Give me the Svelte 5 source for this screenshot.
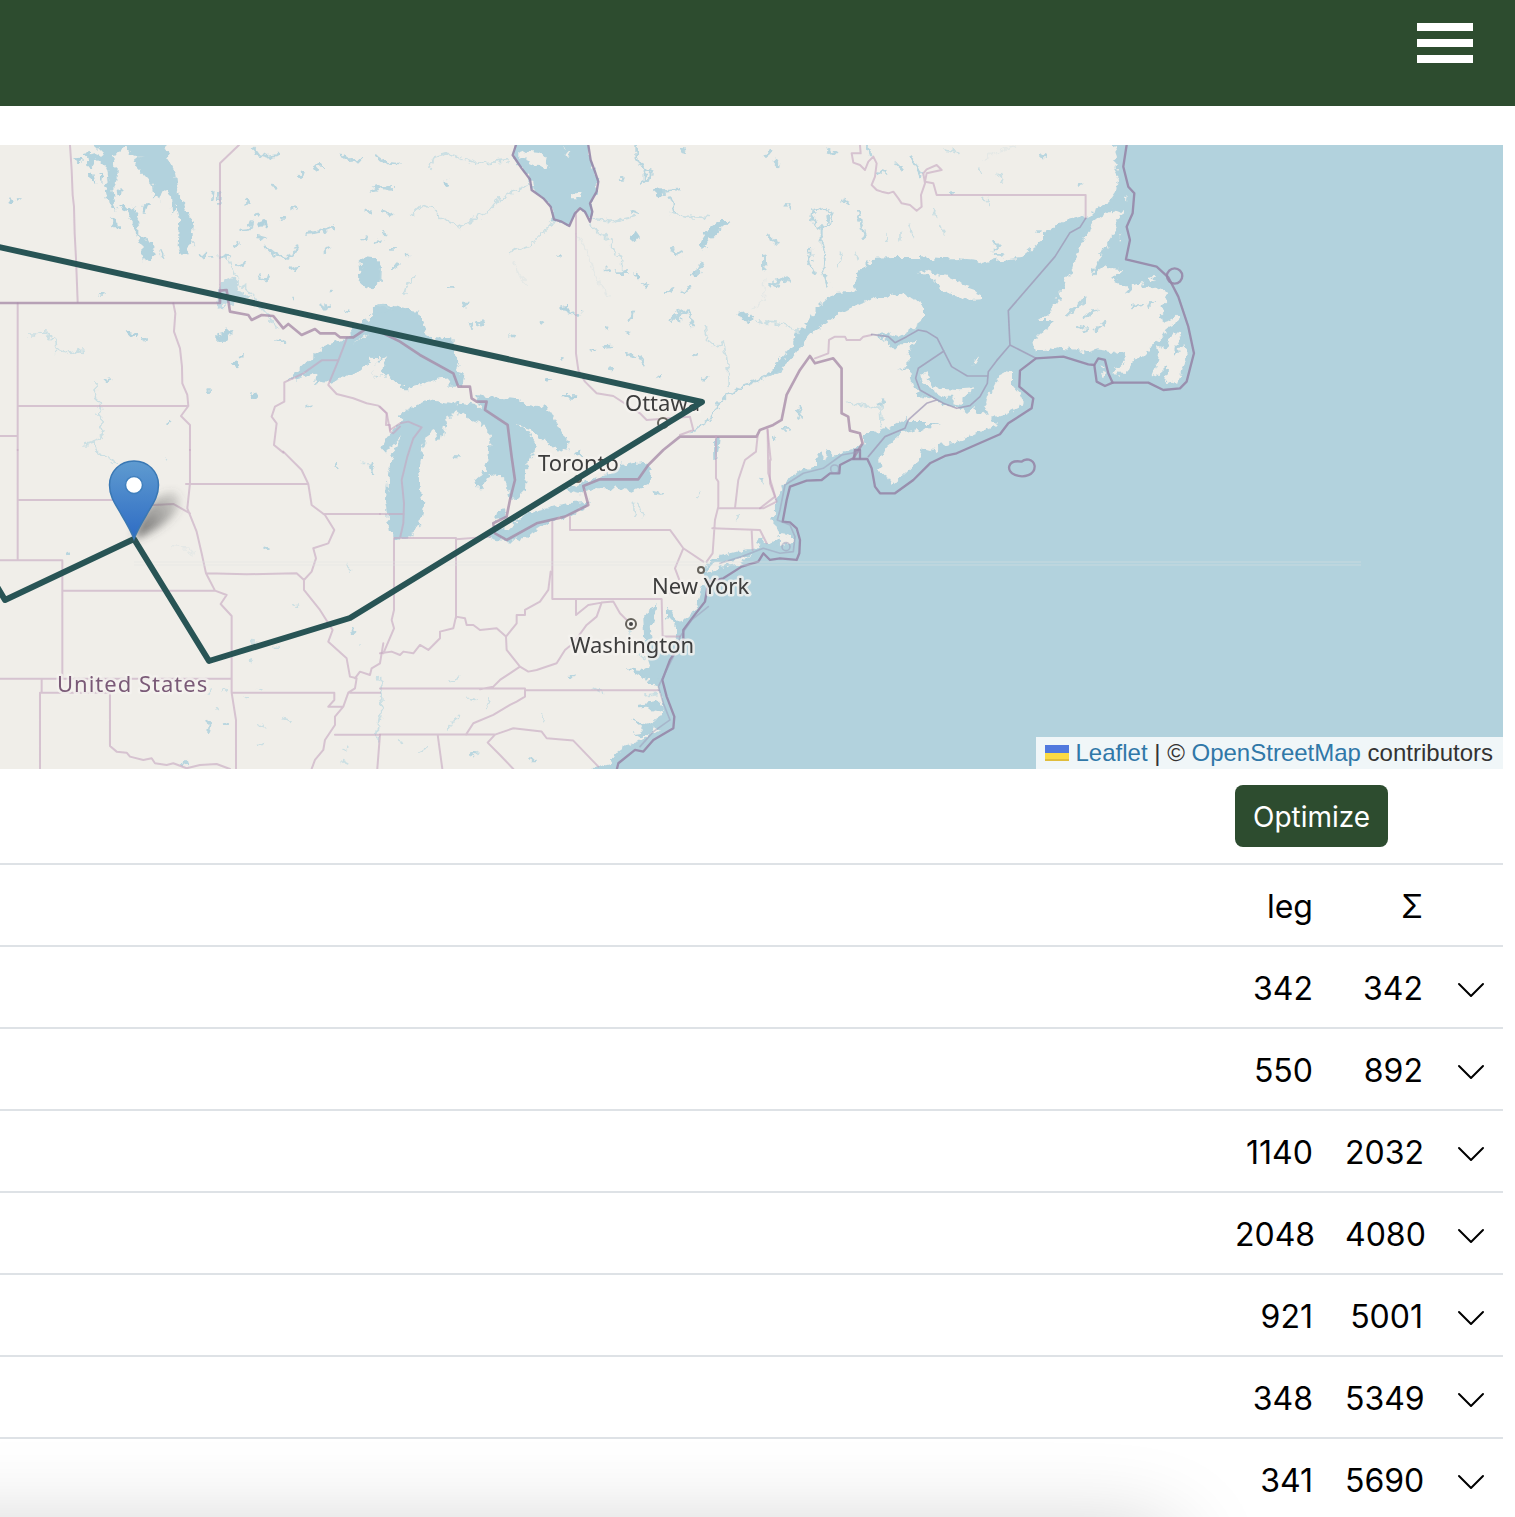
<script>
  const legs = [342, 550, 1140, 2048, 921, 348, 341];
  const rows = legs.map((leg, i) => ({
    leg,
    sum: legs.slice(0, i + 1).reduce((a, b) => a + b, 0)
  }));
</script>

<div class="page">
  <header>
    <button class="menu" aria-label="Menu"><span></span><span></span><span></span></button>
  </header>

  <main>
    <div class="map">
      <svg class="tiles" viewBox="0 145 1503 624" role="img" aria-label="Route map">
        <defs>
          <linearGradient id="pin" x1="0" y1="0" x2="0" y2="1">
            <stop offset="0" stop-color="#5f9bd0" />
            <stop offset="1" stop-color="#2e6cc4" />
          </linearGradient>
          <linearGradient id="shade" x1="0" y1="1" x2="1" y2="0">
            <stop offset="0" stop-color="#444" stop-opacity=".8" />
            <stop offset="1" stop-color="#555" stop-opacity=".15" />
          </linearGradient>
          <filter id="soft" x="-40%" y="-40%" width="180%" height="180%"><feGaussianBlur stdDeviation="4" /></filter>
          <!-- roughens shorelines the way low-zoom map tiles do -->
          <filter id="shore" filterUnits="userSpaceOnUse" x="-20" y="125" width="1543" height="664">
            <feTurbulence type="fractalNoise" baseFrequency=".16" numOctaves="2" seed="4" />
            <feDisplacementMap in="SourceGraphic" scale="9" xChannelSelector="R" yChannelSelector="G" />
            <feGaussianBlur stdDeviation=".6" />
          </filter>
          <filter id="tile" filterUnits="userSpaceOnUse" x="-20" y="125" width="1543" height="664"><feGaussianBlur stdDeviation=".5" /></filter>
        </defs>

        <rect class="water" x="0" y="145" width="1503" height="624" />

        <g filter="url(#shore)">
        <!-- mainland -->
        <path class="land" d="M-20 125H1113L1113 145 1117 157 1113 162 1117 167 1115 172 1119 180 1117 190 1110 200 1093 212 1087 218 1082 215 1067 220 1053 227 1043 235 1043 240 1032 248 1020 258 993 261 982 264 977 260 957 258 940 259 920 257 893 257 873 258 863 268 857 275 855 287 850 292 835 293 823 302 813 312 807 323 797 333 792 347 780 362 770 372 759 380 780 372 793 357 803 343 813 332 827 322 843 312 860 303 877 297 897 294 910 297 923 307 923 320 910 330 898 337 887 333 875 334 888 342 893 349 903 344 917 340 908 353 907 367 898 369 910 370 912 383 917 395 933 398 942 405 960 408 967 414 975 407 978 415 988 413 985 403 987 395 993 390 1003 370 1012 372 1012 385 1023 397 1022 405 1007 413 990 418 997 425 977 433 957 442 940 445 937 452 923 448 920 460 907 472 893 485 888 477 881 473 879 460 887 445 903 433 920 430 940 423 910 423 907 418 890 428 873 433 862 433 865 443 857 448 843 452 833 455 828 451 825 460 820 452 815 460 815 467 800 470 787 480 780 490 776 502 778 510 770 520 777 527 780 535 792 537 792 542 777 547 765 545 760 548 743 550 713 558 707 563 703 575 703 583 698 600 692 613 682 623 673 617 667 606 667 617 677 627 677 637 667 653 658 667 655 680 660 690 663 703 663 715 647 725 660 730 643 740 627 745 617 752 610 763 593 767 590 789H-20Z" />
        <path class="land" d="M711 564 735 559 752 556 742 562 722 568 707 572Z" />

        <!-- north-west lakes -->
        <g transform="translate(0 140) scale(.3333)">
          <path class="water" d="M285 15V-20H485L495 15 510 65 525 95 530 140 545 180 560 215 580 245 575 285 578 312 565 318 558 340 540 342 533 320 537 250 540 235 530 195 517 228 513 170 500 152 485 158 477 180 462 170 455 132 435 110 418 95 400 66 418 52 435 50 395 50 380 15H368L362 38 335 42 350 80 350 120 340 140 345 190 352 212 335 205 322 185 315 130 328 115 322 85 300 62 285 58 280 82 262 78 260 52 252 42 275 38 300 48 310 40Z" />
          <path class="water" d="M412 283 440 295 455 315 468 342 455 360 428 364 424 340 425 318ZM332 228 348 238 356 262 340 262ZM400 200 412 205 408 228 425 250 415 262 415 285 405 275 402 255 388 228 380 215 362 210 358 198 370 190 382 205ZM425 218 428 200 440 190 452 190 440 200 434 218ZM350 145 362 150 360 168 352 165ZM268 98 280 102 286 125 275 122ZM300 100 310 105 307 124 300 118ZM226 55 240 53 246 64 234 70ZM22 190 30 170 38 185ZM44 175H60L52 182Z" />
          <path class="water" d="M1082 365 1100 352 1130 355 1146 380 1142 430 1120 448 1095 440 1075 420 1074 402 1084 395ZM652 580 680 572 702 570 690 592 682 602 652 603ZM695 668 715 662 722 680 710 688ZM715 645 732 640 730 654ZM750 758 768 755 774 775 758 778ZM775 248 795 240 800 258 780 262ZM380 575 415 585 412 592 385 588Z" />
          <path class="lake" d="M760 25 775 45 800 52 835 45M945 85 960 72 972 85M1020 45 1045 62 1080 60M1130 50 1160 70 1195 72M900 110 910 98M815 138 835 142M1115 148 1145 140 1175 145M920 280 960 275 995 262M725 270 745 268 752 245M795 318 825 345 860 352 880 345 892 320M760 225 775 222M875 205 888 200M845 235 855 235M775 290 795 295M700 315 715 310M715 375 735 370M660 347 690 350M778 410 800 420 805 405M870 390 890 382M880 480 884 470M965 495 980 505 990 500M975 335 985 320M1085 300 1100 290M1125 310 1140 305M1100 215 1112 214M1150 215 1168 222M1040 510 1050 512M990 450H998M1180 385 1195 375M640 150 637 185M655 160V185M735 190 742 183M600 345H615M485 335 492 350M300 463H314M830 600 858 606M620 752H630M430 598 440 602M318 720 330 716M500 850 510 846M920 798H934M640 350 632 355" />
          <path class="river" d="M85 588 105 588 120 578 140 580 150 595 165 598 175 630 205 640 235 632 252 630M165 640 175 630M288 730 290 785 305 805 300 825 285 825M305 825 302 855 312 868 308 890 285 905 258 912M285 905 288 935 325 955M690 360 705 400 730 440 760 470 790 510 830 560" />
          <path class="water" d="M660 425 700 410 720 430 705 450 735 460 755 475 700 470 695 495 650 500 655 470Z" opacity=".75" />
          <!-- Lake Superior -->
          <path class="water" d="M860 722 900 685 960 628 1040 595 1060 570 1085 545 1110 535 1112 510 1130 495 1145 488 1195 502 1256 516 1268 550 1285 590 1360 596 1340 620 1378 660 1365 695 1395 700 1385 740 1345 740 1350 712 1325 715 1280 728 1240 738 1245 745 1210 745 1180 720 1165 708 1130 705 1115 715 1115 695 1135 665 1165 648 1130 648 1080 690 1050 705 1025 715 990 730 965 725 945 735 950 695 905 712Z" />
          <path class="water" d="M1110 535 1150 515 1200 508 1255 512 1275 570 1290 592 1360 596 1370 690 1250 735 1200 740 1100 620 1070 560Z" />
          <path class="land" d="M1115 715 1115 695 1135 665 1165 648 1150 670 1148 690 1165 708 1130 702ZM1145 652 1115 690 1110 650ZM1062 608 1108 585 1090 590Z" />
        </g>

        <!-- James Bay, Huron, Michigan -->
        <g transform="translate(380 140) scale(.3333)">
          <path class="water" d="M408-20H625V15L632 60 645 95 655 125 650 155 630 190 637 215 630 240 615 215 600 205 585 220 568 258 545 245 522 238 512 200 490 175 455 150 450 118 425 85 400 60 400 40Z" />
          <path class="land" d="M415 42 440 32 480 36 500 60 507 88 475 82 445 68 415 55ZM576 168 590 158 605 157 602 170 590 178 576 178ZM556 38 567 36 568 47 560 46ZM550 18 557 22 555 30Z" />
          <path class="water" d="M5 932 25 885 60 845 70 815 125 790 150 780 190 788 222 795 240 788 290 795 310 810 290 765 330 772 420 778 440 795 500 800 530 850 568 915 560 935 520 925 490 900 450 865 400 850 440 870 465 910 460 940 440 965 435 1050 405 1080 390 1078 375 1020 350 1000 325 1010 305 1045 290 1045 285 1020 310 1000 325 960 330 880 300 850 255 830 228 810 195 855 185 905 170 905 165 870 145 880 130 925 125 965 115 1000 130 1090 120 1150 90 1195 50 1200 30 1180 15 1080 25 1000 40 935 65 885 30 925 10 935Z" />
          <path class="water" d="M345 1170 385 1168 440 1120 490 1108 560 1090 630 1085 620 1100 560 1130 505 1150 460 1180 400 1205 350 1200 320 1190ZM355 1110 375 1108 378 1135 345 1140ZM560 1050 600 1030 640 1015 690 1000 720 975 760 970 800 965 815 985 812 1030 760 1055 700 1045 640 1045 600 1060Z" />
          <path class="water" d="M965 335 960 310 970 290 990 260 1020 240 1050 240 1040 252 1018 270 990 300 975 320ZM818 150 845 148 860 155 835 166ZM1075 518 1100 513 1117 535 1105 550 1088 542ZM540 500 560 494 570 512 550 515ZM190 122 202 122 206 138 196 142ZM530 345 542 338 542 355ZM935 405 955 392 958 400 942 412ZM630 628 650 626 645 636ZM745 288 765 272 778 290 765 305ZM760 400 775 398 778 415 768 415ZM785 430H802L798 445ZM830 712 845 702 848 718ZM540 762 595 763 592 775 560 772ZM585 935 600 928 610 945 590 950ZM498 714H510L504 724Z" />
          <path class="lake" d="M770 15V50L785 80 815 95 810 115 785 130M795 85V125M850 155 895 150M870 170 880 200 885 220M965 370 950 400M710 398H740M675 390 685 388M757 215 770 220M880 330 890 345 905 335M1150 345 1153 390M1168 290 1190 310M1175 430 1195 440M860 455 880 445M905 455 930 445M870 545 900 520 925 515 940 555M890 510 900 540M735 640 765 650M780 645 790 670M670 620 690 618M560 515 575 522 600 520M740 578H748M680 565 688 568M750 545 760 515M550 660 540 655M480 540 492 545M250 500 258 492M270 560 275 550M295 555 315 545M40 385 48 378M10 280 18 285M10 215 30 222M5 140 35 140M35 325 48 325M205 442H214M75 345H90M1155 45 1170 40M1185 65 1195 75M905 30 915 32M168 225H176M392 588H400M720 118H730M940 645 950 640M970 715 982 712M690 680 700 690M0 385V415M225 950 235 952M0 495 30 505" />
          <path class="river" d="M520 245 485 280 450 315 385 338M445 135 400 155 350 185 320 220 270 245 245 262 185 235 160 205 125 195 95 225M625 250 665 285 695 305 710 345 725 355V395M150 85 160 55 200 42 235 50 290 70 390 62M870 220 900 225 930 230 980 232M970 560 985 600 1010 620 1030 605 1040 650 1045 740M75 460 85 430 105 410M1130 540 1160 550 1200 552M640 235 700 245 760 230" />
          <path class="faint" d="M590 280 620 330 650 410 685 475M400 365 420 410 440 430M1155 415 1150 480 1120 510" />
          <path class="riverwide" d="M1200 690 1150 715 1090 735 1040 770 1010 800 990 840 960 860 930 880" />
          <path class="water" d="M1175 695 1200 650V690ZM1005 890H1020L1012 960H1006Z" />
        </g>

        <!-- Gulf of St Lawrence islands and Quebec lakes -->
        <g transform="translate(760 140) scale(.3333)">
          <path class="land" d="M470 396 490 390 520 398 560 408 590 420 615 438 650 450 665 478 630 480 600 472 565 460 540 445 525 425 500 405ZM478 718 502 690 508 700 500 718 515 725 520 742 560 745 600 748 643 745 625 760 608 775 605 795 580 790 585 770 550 770 525 755 500 742 495 728ZM640 670 655 650 660 652 650 668Z" />
          <path class="riverwide" d="M185 205 205 205 216 228 210 255 190 264 165 258 156 235 160 212 185 205M185 262V310L195 345 190 395 205 440M150 320 152 355 145 355 165 405" />
          <path class="lake" d="M200 225 203 245M15 50 30 35M45 60 58 75M205 30 225 42M80 190 92 205M30 295 55 310M245 180 262 190M10 355V385M35 435 60 420 75 410 90 430M295 215 305 260 315 290M355 95 380 100M410 70 430 90M455 50 480 105M325 20 330 45M570 155H578M847 47H854M700 305 712 312 705 330M705 343H728" />
          <path class="river" d="M0 545 60 550 100 565 120 580M555 30 600 40M655 85 665 100M715 100 730 125M672 175 685 190M520 205 530 230M445 250 460 290M420 280V300M380 280 384 300M235 380 245 340M288 340 292 360M545 260 555 282M265 790 330 800 360 805 372 785M360 810 365 860" />
          <path class="faint" d="M665 60 700 40 770 15" />
          <path class="lake" d="M360 795 370 785M110 810 122 835M120 800V815M40 890 42 900M70 868H84" />
        </g>

        <!-- Newfoundland -->
        <g transform="translate(1020 140) scale(.3333)">
          <path class="land" d="M40 602 60 582 85 562 105 542 80 540 50 540 65 528 90 530 95 505 110 478 125 480 118 455 130 445 140 415 155 390 170 340 185 310 200 302 190 290 210 275 220 245 240 230 275 210 280 220 312 210 302 238 285 238 290 262 275 290 262 310 250 335 235 355 220 388 215 410 235 390 260 370 275 385 308 388 290 402 275 415 295 430 320 440 320 465 345 435 372 425 365 445 400 440 442 460 435 485 415 500 435 515 418 530 440 545 475 525 475 545 445 560 425 595 405 605 390 630 365 655 345 655 330 680 320 702 275 700 280 685 300 680 320 655 315 642 295 645 262 632 230 628 205 636 160 628 110 622 80 632 48 633ZM395 710 412 670 418 640 410 615 435 630 450 600 475 575 486 580 465 620 460 650 480 625 493 612 500 640 485 690 475 728 455 725 435 730 440 700 442 678 415 702 400 712ZM385 418 400 410 408 420 395 428ZM245 675 255 678 248 685ZM246 695 256 698 252 712ZM310 170 320 165 318 178ZM295 300 308 296 304 308ZM296 282H304L300 290Z" />
          <path class="lake" d="M145 522 175 500 195 470M195 530 215 512 232 510M225 570 238 562M175 558 190 562M245 552 255 548M190 575 200 572M340 498 365 495M380 500 395 492M180 130H183M70 48H73M50 275H58" />
        </g>

        <!-- east coast bays and southern lakes -->
        <g transform="translate(380 450) scale(.3333)">
          <path class="water" d="M830 462 822 500 812 535 820 580 850 610 875 612 850 660 830 705 800 690 765 670 740 655 790 660 808 650 800 625 785 600 792 560 790 495 812 478ZM775 765 830 755 850 770 840 790 810 772 780 775ZM755 810 810 822 820 850 780 862 758 850 790 845 775 820Z" />
          <path class="river" d="M800 625 775 615M750 540 740 555M830 730 800 735M760 160 765 200M775 160 790 200M950 138 965 122M815 125 845 132M1070 210 1080 195M1140 85 1150 95M200 840 240 790M205 695 240 685M320 775 330 740M640 715 670 730M270 745 285 748M50 870 70 880M120 905 145 890M485 795 492 815M275 920 290 905M450 930H470M5 680V800" />
          <path class="lake" d="M275 917 284 910M452 930H466M573 678H583M820 127 842 130M228 20H234M1142 88H1150" />
          <path class="water" d="M1185 150 1200 130V215L1185 210ZM1130 280 1148 262 1165 285 1200 260V290L1150 310Z" />
        </g>
        <g transform="translate(0 450) scale(.3333)">
          <path class="lake" d="M1112 38 1120 70M1010 40 1015 60M1058 535 1062 545M625 810 630 825 625 850M672 820 680 824M550 942 560 930 562 945M788 288 805 297M195 305 212 312" />
          <path class="river" d="M1045 340V360M882 467 896 465M1080 588H1084M755 575 770 578M820 590 832 588M752 635 762 632M670 725 685 712M738 745 745 740M770 720 785 718M650 772 655 778M775 822 792 830M852 806 870 811M772 886H794M1025 900 1040 895M1030 935 1040 940M1085 40H1095M500 25V30M628 720V732M285 0 300 12 350 40M1130 680 1145 700 1142 740 1150 775M1140 800 1130 850 1140 870" />
          <path class="faint" d="M515 290 570 295 580 315" />
        </g>
        </g>

        <!-- internal boundaries -->
        <g filter="url(#tile)">
        <g transform="translate(0 140) scale(.3333)">
          <path class="state" d="M210 15 215 90 218 165 222 200 224 280 228 355 233 485M717 15 660 70V450M53 490V930M53 798H565M0 888H50M520 490 526 520 522 575 540 625 546 680 547 730 562 765 565 798 543 828 570 855V930M1040 597 1015 662 985 735 1010 762 1060 775 1100 790 1135 797 1160 820 1158 855 1170 855V875L1180 880 1200 860M1015 661H965L910 700 853 727V785L825 800 815 830 830 850 822 915 850 938" />
          <path class="nation" d="M0 489H660V452L680 450 690 515 745 525 755 540 785 525 820 528 850 565 865 552 905 585 945 567 960 580 1005 580 1020 592 1060 592 1100 565 1150 580 1200 605 1260 645 1360 700 1375 740 1410 740 1415 775 1430 785 1460 785 1455 810 1523 855 1535 950 1545 1020 1530 1080 1520 1130 1480 1150 1485 1180 1520 1200 1610 1150 1695 1130 1765 1095 1750 1038 1800 1018H1915L1945 975 1990 930 2040 890H2270L2280 870 2320 855 2345 840 2360 765 2400 690 2430 648 2445 670 2500 655 2525 685V820L2545 830 2550 872 2580 880 2588 910 2560 955" />
        </g>
        <g transform="translate(380 140) scale(.3333)">
          <path class="state" d="M588 215V640L595 690 615 725 650 760 700 768 780 820 800 840 870 835 930 830 940 870 900 885M1008 888V1015L1015 1025V1100L1005 1140 998 1240 980 1265M1133 888 1128 935 1095 960 1075 1020 1065 1105M1015 1105H1150L1190 1085 1180 1050 1165 1000 1163 870M997 1165 1140 1170 1160 1210M1115 1170 1118 1230M0 800 20 820 30 870 60 850 85 845 125 862 100 895 82 950 65 1020 72 1090 70 1150 60 1195M0 1122H72M42 1195V1410L35 1440 42 1465 10 1540M42 1194H228V1435M228 1198 330 1190M517 1145V1377H845L848 1490H900M570 1130V1170H870L885 1190 910 1225 970 1265M910 1225 885 1285 900 1325 870 1360M588 1377V1425L625 1395 665 1388 700 1385 720 1420 745 1445M665 1388 650 1430 620 1455 580 1510 555 1530 530 1570 470 1590 445 1595 420 1580 380 1530 378 1490 410 1450 410 1425 435 1425 435 1410 480 1385 505 1350 512 1295M378 1490 350 1465 300 1470 280 1455 260 1455 255 1435 228 1430 220 1465 180 1475 180 1495 145 1530 120 1515 100 1540 70 1535 60 1545 35 1535 0 1540M420 1580 360 1620 340 1640 300 1648M0 1646H435V1670L410 1685 390 1695 340 1725 280 1750 258 1784M435 1651H835M0 1784H345L400 1765 485 1775 500 1795 580 1802 655 1880M345 1784 323 1808 360 1845 400 1887M173 1784 187 1887" />
          <path class="coast" d="M408 15 398 45 425 85 450 118 455 150 490 175 512 200 522 238 545 245 568 258 585 220 600 205 615 215 630 245 637 215 630 190 650 155 655 125 645 95 632 60 625 15" />
        </g>
        <g transform="translate(0 450) scale(.3333)">
          <path class="state" d="M53 150H345L460 165 520 162 570 190M0 331H187V685M53 331V0M187 422H645L680 435 662 462 695 498V728L708 810V957M0 686H695M125 686V728M120 728H330V888L350 905 380 908 390 920 430 930 455 925 465 940 500 945 520 940 560 955 600 945 650 942 690 957M120 728V957M570 0V100L562 175 590 245 605 310 618 370 645 422M558 102H925L905 60 850 5M925 102 935 165 975 195 1003 240 985 280 940 295 948 325 935 365 912 390 890 370 740 373 620 370M970 192H1140M912 390V420L960 480 998 540 985 575 1040 625 1050 680 1070 685 1065 715 1045 728 1030 770 1005 800 1005 825 975 870 970 900 945 930 935 957M698 728H1003V750L985 770H1030M1150 580 1145 610M1145 610 1140 640 1115 655 1110 675 1080 665 1065 685M1050 728H1140M1005 854H1140M1140 854 1132 957" />
        </g>
        <g transform="translate(760 140) scale(.3333)">
          <path class="state" d="M300 15 302 40 275 40 280 68 300 75 315 90 325 65 340 50 350 70 345 110 335 135 350 150 365 155 385 160 400 155 415 175 425 190 450 195 470 212 485 200 483 165 495 130 490 100 500 88 530 75 545 90 500 100 495 125 520 130 530 165H977V235M165 655 205 640 207 600 225 590 255 590 260 600 300 600 310 590 335 585M22 865 32 960M30 960 30 1030 45 1070 0 1105" />
          <path class="maritime" d="M335 583 385 590 405 608 440 590 475 570 500 575 532 595 552 635 575 680 622 708H683M977 235 960 262 930 278 885 350 745 512 750 615 710 662 685 695 682 730 660 770 630 797 590 805 550 790 480 750 467 715 475 685 552 633M750 615 828 655M530 780 500 790 445 840 435 865 375 890 325 950" />
          <path class="coast" d="M1100 15 1090 80 1105 140 1123 160 1118 220 1100 260 1110 300 1098 358 1190 380 1225 412 1255 470 1285 560 1302 640 1280 725 1260 745 1210 750 1165 728H1058L1035 738 1010 725 1003 675 985 673 910 650 828 655 780 692 778 740 820 775 815 805 745 850 720 883 590 940 555 948 510 970 460 1020 405 1060 360 1060 345 1040 335 985 322 957H275L240 975 238 1000 210 1000 185 1020 140 1022 90 1040 80 1080 68 1145 90 1147 110 1165 120 1200 118 1240 110 1260 60 1255 30 1260 10 1240-5 1265-55 1280-110 1315-155 1325-165 1385-200 1430-230 1470-230 1500-270 1560-293 1620-280 1670-257 1730-260 1765-320 1800-350 1835-375 1830-425 1870-430 1890" />
          <path class="coast" d="M1003 675 1015 655 1035 660 1045 700 1058 728" />
          <circle class="coast" cx="1244" cy="408" r="23" />
          <path class="coast" d="M785 965C740 958 738 995 765 1005S825 1005 824 978C820 955 795 955 785 965ZM282 955 285 930H300V955" />
          <path class="inner" d="M300 935 245 945 190 985 130 1000 75 1035 60 1110 52 1140 90 1155 105 1190 100 1235 60 1240 10 1225-55 1250-120 1270" />
          <path class="inner" d="M-155 1400-205 1440-240 1490-250 1530-280 1590-305 1640-290 1690-270 1740-320 1775-360 1820" />
          <circle class="inner" cx="78" cy="1220" r="12" />
          <circle class="inner" cx="224" cy="987" r="12" />
        </g>

        <path class="seam" d="M134 562H1361M134 565H1361" />

        <g class="labels">
          <circle cx="631" cy="624" r="5" /><circle class="dot" cx="631" cy="624" r="2" />
          <circle cx="701" cy="570" r="3" /><circle cx="663" cy="423" r="5" /><circle cx="578" cy="479" r="3" />
          <text x="625" y="411">Ottawa</text>
          <text x="538" y="471">Toronto</text>
          <text x="652" y="594">New York</text>
          <text x="570" y="653">Washington</text>
          <text class="country" x="57" y="692">United States</text>
        </g>
        </g>

        <path class="route" d="M-10 245 702 402 350 618 209 661 134 539 5 600-10 575" />
        <path d="M134 539C142 510 155 493 174 492C188 500 176 524 134 539Z" fill="url(#shade)" filter="url(#soft)" />
        <path d="M134 461C120 461 109.500 471.500 109.500 485C109.500 497 116 505 121 514C127 524 131 531 134 539C137 531 141 524 147 514C152 505 158.500 497 158.500 485C158.500 471.500 148 461 134 461Z" fill="url(#pin)" stroke="#3a78b4" stroke-width="1.500" />
        <circle cx="134" cy="485" r="8.500" fill="#fff" stroke="#3f7fbd" stroke-width="1.500" />
      </svg>

      <div class="attribution">
        <svg class="flag" viewBox="0 0 24 16" aria-hidden="true">
          <path fill="#5179de" d="M0 0H24V8H0Z" /><path fill="#fbda44" d="M0 8H24V14H0Z" /><path fill="#e0bd3c" d="M0 14H24V16H0Z" />
        </svg>
        <a href="#leaflet">Leaflet</a> | © <a href="#osm">OpenStreetMap</a> contributors
      </div>
    </div>

    <table>
      <colgroup><col /><col class="num" /><col class="num" /><col class="act" /></colgroup>
      <tbody>
        <tr><td></td><td colspan="3" class="tools"><button class="optimize">Optimize</button></td></tr>
        <tr><th></th><th scope="col">leg</th><th scope="col">Σ</th><th></th></tr>
        {#each rows as row}
          <tr>
            <td></td>
            <td>{row.leg}</td>
            <td>{row.sum}</td>
            <td>
              <button class="toggle" aria-label="Show leg details">
                <svg viewBox="0 0 32 32" aria-hidden="true"><path d="M4 11 16 23 28 11" /></svg>
              </button>
            </td>
          </tr>
        {/each}
      </tbody>
    </table>
  </main>
  <div class="sheet"></div>
</div>

<style>
  :global(body) { margin: 0; background: #fff; }
  .page {
    position: relative;
    height: 100vh;
    overflow: hidden;
    color: #000;
    font-family: Inter, "Liberation Sans", sans-serif;
    font-size: 32px;
    line-height: 48px;
  }
  button { font: inherit; border: 0; cursor: pointer; }
  header {
    display: flex;
    justify-content: flex-end;
    align-items: flex-start;
    box-sizing: border-box;
    height: 106px;
    padding: 23px 42px;
    background: #2d4c2f;
  }
  .menu { display: grid; gap: 8px; width: 56px; padding: 0; background: none; }
  .menu span { height: 8px; background: #fff; }
  main { padding: 39px 12px 0 0; }
  .map { position: relative; }
  .tiles { display: block; width: 100%; height: auto; }

  .water { fill: #b2d2dd; }
  .land { fill: #f0eee9; }
  .lake, .river, .riverwide, .faint, .state, .nation, .coast, .maritime, .inner { fill: none; stroke-linejoin: round; stroke-linecap: round; }
  .lake { stroke: #b9d6df; stroke-width: 8; }
  .river { stroke: #cbdfe3; stroke-width: 5; }
  .riverwide { stroke: #b9d6df; stroke-width: 6; }
  .faint { stroke: #e4e8e6; stroke-width: 4; }
  .state { stroke: #c4a5c0; stroke-opacity: .6; stroke-width: 6; }
  .nation { stroke: #a487a6; stroke-opacity: .75; stroke-width: 8; }
  .coast { stroke: #9687a8; stroke-opacity: .9; stroke-width: 7; }
  .maritime { stroke: #9c94b3; stroke-opacity: .7; stroke-width: 5; }
  .inner { stroke: #9c9cba; stroke-opacity: .5; stroke-width: 5; }
  .seam { stroke: #dfe5e3; stroke-opacity: .5; }
  .labels { font-family: "Noto Sans", sans-serif; font-size: 22px; }
  .labels text { fill: #3c3c3c; stroke: #f5f3ef; stroke-width: 5; stroke-opacity: .8; paint-order: stroke; stroke-linejoin: round; }
  .labels .country { fill: #7a5a77; letter-spacing: 1px; }
  .labels circle { fill: #f5f3ef; stroke: #66635c; stroke-width: 2; }
  .labels .dot { fill: #444; stroke: none; }
  .route { fill: none; stroke: #285455; stroke-width: 6; stroke-linejoin: round; }

  .attribution {
    position: absolute;
    right: 0;
    bottom: 0;
    padding: 0 10px 0 9px;
    background: rgba(255, 255, 255, .8);
    color: #333;
    font: 24px/32px "Liberation Sans", Arial, sans-serif;
    white-space: nowrap;
  }
  .attribution a { color: #3078a8; text-decoration: none; }
  .flag { width: 24px; height: 16px; }

  table { width: 100%; border-collapse: separate; border-spacing: 0; table-layout: fixed; }
  .num { width: 110px; }
  .act { width: 64px; }
  td, th {
    height: 48px;
    padding: 18px 16px 14px;
    border-bottom: 2px solid #dee2e6;
    font-weight: 400;
    text-align: right;
    vertical-align: top;
  }
  .tools { height: 62px; padding: 16px; text-align: left; }
  .optimize {
    display: block;
    height: 62px;
    padding: 2px 18px 0;
    border-radius: 8px;
    background: #2d4c2f;
    color: #fff;
    font-size: 28px;
  }
  .toggle { display: flex; align-items: center; height: 48px; padding: 0; background: none; }
  .toggle svg { width: 32px; height: 32px; fill: none; stroke: #000; stroke-width: 2; stroke-linecap: round; stroke-linejoin: round; }
  .sheet {
    position: absolute;
    top: 100%;
    left: -120px;
    right: 340px;
    height: 80px;
    border-radius: 24px;
    box-shadow: 0 16px 90px rgba(0, 0, 0, .22);
  }
</style>
